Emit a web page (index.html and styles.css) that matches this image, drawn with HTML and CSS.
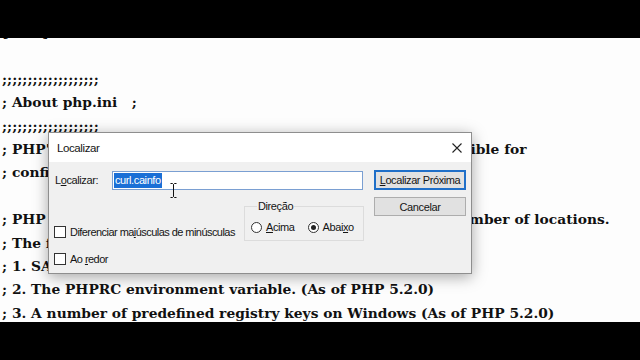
FILE: index.html
```html
<!DOCTYPE html>
<html lang="pt">
<head>
<meta charset="utf-8">
<title>php.ini - Localizar</title>
<link rel="stylesheet" href="styles.css">
</head>
<body>
<div class="screen">
  <div class="bar"></div>
  <div class="editor">
    <pre class="doc">[PHP]

;;;;;;;;;;;;;;;;;;;
; About php.ini   ;
;;;;;;;;;;;;;;;;;;;
; PHP's initialization file, generally called php.ini, is responsible for
; configuring many of the aspects of PHP's behavior.

; PHP attempts to find and load this configuration from a number of locations.
; The following is a summary of its search order:
; 1. SAPI module specific location.
; 2. The PHPRC environment variable. (As of PHP 5.2.0)
; 3. A number of predefined registry keys on Windows (As of PHP 5.2.0)</pre>

    <div class="dialog">
      <div class="titlebar">
        <span class="title">Localizar</span>
        <svg class="close" width="10" height="10" viewBox="0 0 10 10"><path d="M0.5 0.5 L9.5 9.5 M9.5 0.5 L0.5 9.5" stroke="#222" stroke-width="1.1" fill="none"/></svg>
      </div>
      <div class="dbody">
        <div class="leftcol">
          <div class="row1">
            <span class="lbl">L<u>o</u>calizar:</span>
            <div class="input"><span class="sel">curl.cainfo</span></div>
          </div>
          <div class="row2">
            <div class="checks">
              <div class="check"><span class="box"></span><span>Diferenciar ma<u>i</u>úsculas de minúsculas</span></div>
              <div class="check"><span class="box"></span><span>Ao <u>r</u>edor</span></div>
            </div>
            <fieldset class="group">
              <legend>Direção</legend>
              <div class="radios">
                <div class="radio"><span class="circle"></span><span><u>A</u>cima</span></div>
                <div class="radio"><span class="circle on"></span><span>Abai<u>x</u>o</span></div>
              </div>
            </fieldset>
          </div>
        </div>
        <div class="btncol">
          <div class="btn primary"><u>L</u>ocalizar Próxima</div>
          <div class="btn">Cancelar</div>
        </div>
      </div>
    </div>

    <svg class="ibeam" width="7" height="15" viewBox="0 0 7 15"><path d="M0.5 0.5 H2.5 L3.5 1.5 L4.5 0.5 H6.5 M3.5 1.5 V13.5 M0.5 14.5 H2.5 L3.5 13.5 L4.5 14.5 H6.5" stroke="#111" stroke-width="1" fill="none"/></svg>
  </div>
  <div class="bar"></div>
</div>
</body>
</html>
```

FILE: styles.css
```css
html, body {
  margin: 0;
  padding: 0;
  background: #000;
}
.screen {
  width: 640px;
  height: 360px;
  display: flex;
  flex-direction: column;
  overflow: hidden;
}
.bar {
  height: 38px;
  background: #000;
  flex: none;
}
.editor {
  position: relative;
  height: 284px;
  flex: none;
  background: #fdfdfd;
  overflow: hidden;
}
.doc {
  margin: -17px 0 0 0;
  padding: 0 0 0 2px;
  font-family: "DejaVu Serif", "Liberation Serif", serif;
  font-weight: bold;
  font-size: 13.8px;
  line-height: 23.4px;
  color: #111;
  white-space: pre;
}

.dialog {
  position: absolute;
  left: 48px;
  top: 94px;
  width: 424px;
  height: 142px;
  box-sizing: border-box;
  border: 1px solid #8e8e8e;
  background: #f0f0f0;
  box-shadow: 0 3px 14px rgba(0, 0, 0, 0.35);
  font-family: "Liberation Sans", Arial, sans-serif;
  font-size: 11px;
  letter-spacing: -0.4px;
  color: #151515;
  display: flex;
  flex-direction: column;
}
.titlebar {
  height: 29px;
  background: #fff;
  display: flex;
  align-items: center;
  justify-content: space-between;
  padding: 0 9px 0 8px;
  flex: none;
}
.title {
  font-size: 11.5px;
}
.close {
  display: block;
}
.dbody {
  flex: 1;
  display: flex;
  gap: 9px;
  padding: 8px 5px 0 6px;
}
.leftcol {
  width: 310px;
  display: flex;
  flex-direction: column;
}
.row1 {
  display: flex;
  align-items: center;
  height: 20px;
}
.lbl {
  width: 57px;
  flex: none;
}
.input {
  width: 251px;
  height: 19px;
  box-sizing: border-box;
  border: 1px solid #7a9fd2;
  background: #fff;
  display: flex;
  align-items: center;
  padding-left: 1px;
}
.sel {
  background: #1a6fd6;
  color: #fff;
  padding: 1px 1px;
  line-height: 13px;
}
.row2 {
  display: flex;
  align-items: flex-start;
  margin-top: 9px;
}
.checks {
  width: 190px;
  flex: none;
  display: flex;
  flex-direction: column;
  gap: 14px;
  padding-top: 26px;
  margin-left: -1px;
  letter-spacing: -0.55px;
}
.check {
  display: flex;
  align-items: center;
  gap: 4px;
  height: 13px;
}
.box {
  width: 12px;
  height: 12px;
  box-sizing: border-box;
  border: 1px solid #333;
  background: #fff;
  flex: none;
}
.group {
  width: 120px;
  box-sizing: border-box;
  margin: 0;
  padding: 7px 0 6px 6px;
  border: 1px solid #dcdcdc;
  min-inline-size: 0;
}
.group legend {
  padding: 0 1px;
  margin-left: 6px;
  line-height: 14px;
}
.radios {
  display: flex;
  gap: 13px;
  height: 14px;
  align-items: center;
}
.radio {
  display: flex;
  align-items: center;
  gap: 4px;
}
.circle {
  width: 11px;
  height: 11px;
  box-sizing: border-box;
  border: 1px solid #333;
  border-radius: 50%;
  background: #fff;
  display: flex;
  align-items: center;
  justify-content: center;
  flex: none;
}
.circle.on::after {
  content: "";
  width: 5px;
  height: 5px;
  border-radius: 50%;
  background: #222;
}
.btncol {
  width: 92px;
  display: flex;
  flex-direction: column;
  gap: 7px;
}
.btn {
  height: 19px;
  box-sizing: border-box;
  border: 1px solid #adadad;
  background: #e1e1e1;
  display: flex;
  align-items: center;
  justify-content: center;
}
.btn.primary {
  height: 20px;
  border: 2px solid #1f6fc8;
}
.ibeam {
  position: absolute;
  left: 170px;
  top: 145px;
}
```
